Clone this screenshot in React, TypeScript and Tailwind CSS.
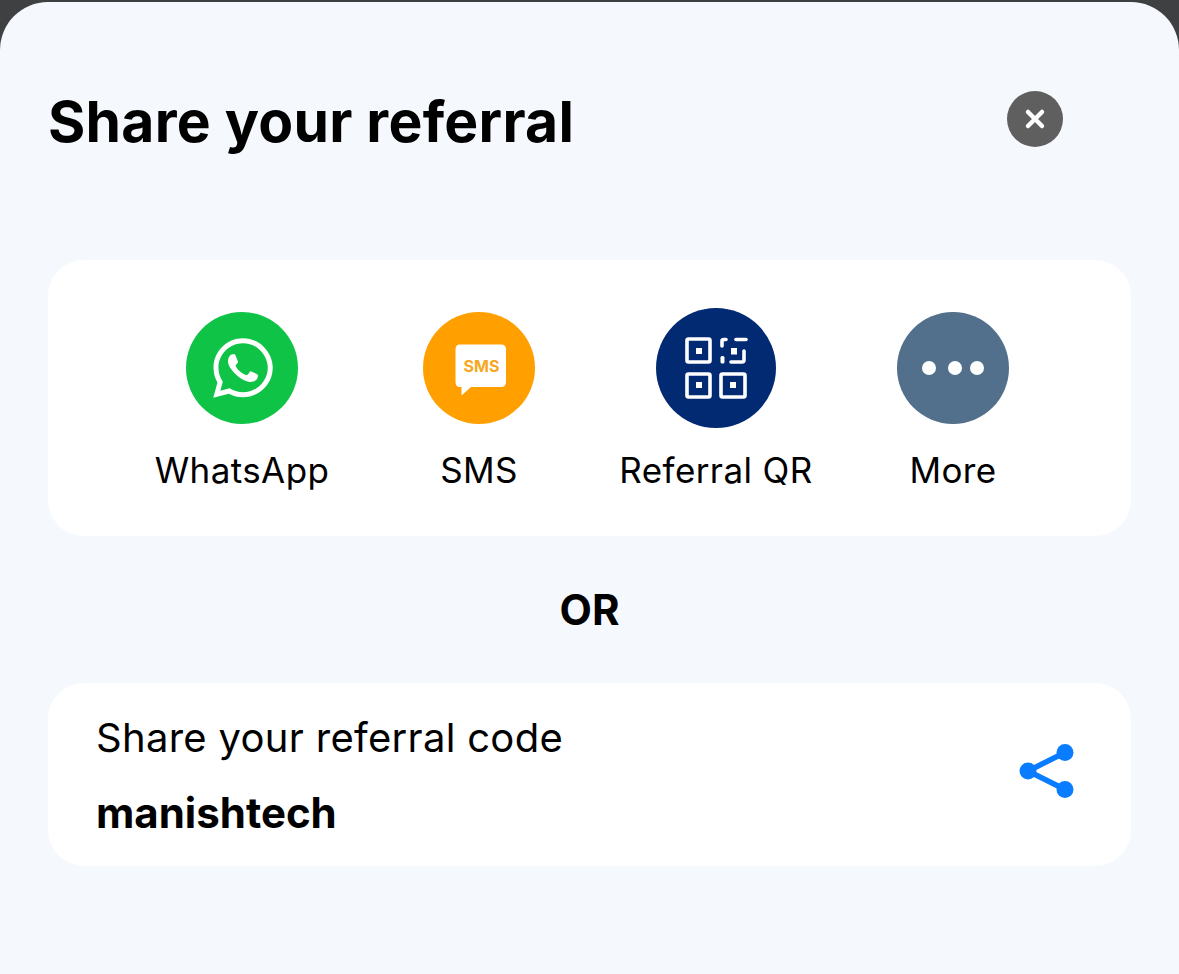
import { FaWhatsapp } from "react-icons/fa";

const font = { fontFamily: "Inter, 'Noto Sans', sans-serif" };

function QrIcon() {
  return (
    <svg viewBox="0 0 64 64" className="w-[64px] h-[64px]" fill="none" stroke="white" strokeWidth="3.6">
      <rect x="3" y="3" width="23" height="23" rx="1.5" />
      <rect x="12" y="12" width="6" height="6" fill="white" stroke="none" />
      <rect x="3" y="38" width="23" height="23" rx="1.5" />
      <rect x="12" y="46" width="6" height="6" fill="white" stroke="none" />
      <rect x="37" y="38" width="24" height="23" rx="1.5" />
      <rect x="46" y="46" width="6" height="6" fill="white" stroke="none" />
      <path d="M38 10V5Q38 3.5 40 3.5H42" strokeLinecap="round" />
      <path d="M52 3.5H62" strokeLinecap="round" />
      <path d="M60 15V24Q60 26 58 26H47" strokeLinecap="round" />
      <rect x="47" y="12" width="6" height="6.5" fill="white" stroke="none" />
      <rect x="36.5" y="20" width="4" height="7.5" rx="1.5" fill="white" stroke="none" />
    </svg>
  );
}

function SmsIcon() {
  return (
    <svg viewBox="0 0 52 52" className="w-[52px] h-[52px] ml-[4px] mt-[4px]">
      <path
        d="M5 0.5H46Q51 0.5 51 5.5V38Q51 43 46 43H16L6.5 51.5V43H5Q0.5 43 0.5 38V5.5Q0.5 0.5 5 0.5Z"
        fill="white"
      />
    </svg>
  );
}

function Item({ label, children }: { label: string; children: React.ReactNode }) {
  return (
    <div className="w-[237px] flex flex-col items-center">
      <div className="h-[120px] flex items-center justify-center">{children}</div>
      <span className="mt-[19px] text-[35px] leading-[46px] tracking-[0.4px] text-black whitespace-nowrap">
        {label}
      </span>
    </div>
  );
}

export default function App() {
  return (
    <div className="w-[1179px] h-[974px] bg-[#3f4042] pt-[2px] overflow-hidden" style={font}>
      <div className="h-[972px] bg-[#f5f9fe] rounded-t-[48px] px-[48px]">
        {/* Header */}
        <div className="flex items-center justify-between pt-[88px] pr-[68px]">
          <h1 className="text-[57px] leading-[64px] font-bold tracking-[0.25px] text-black">Share your referral</h1>
          <button className="w-[56px] h-[56px] mb-[6px] rounded-full bg-[#5f5f5f] flex items-center justify-center">
            <svg viewBox="0 0 24 24" className="w-[24px] h-[24px]" stroke="white" strokeWidth="4.5" strokeLinecap="round">
              <path d="M5 5L19 19M19 5L5 19" />
            </svg>
          </button>
        </div>

        {/* Share options */}
        <div className="mt-[106px] h-[276px] bg-white rounded-[36px] flex justify-center pt-[48px] pl-[16px]">
          <Item label="WhatsApp">
            <div className="w-[112px] h-[112px] rounded-full bg-[#0fc347] flex items-center justify-center">
              <FaWhatsapp className="w-[68px] h-[68px] ml-[2px] text-white" />
            </div>
          </Item>
          <Item label="SMS">
            <div className="relative w-[112px] h-[112px] rounded-full bg-[#ff9f00] flex items-center justify-center">
              <SmsIcon />
              <span className="absolute left-[5px] right-0 top-[44px] text-center text-[16px] leading-[20px] font-bold text-[#f7a823]">
                SMS
              </span>
            </div>
          </Item>
          <Item label="Referral QR">
            <div className="w-[120px] h-[120px] rounded-full bg-[#012a73] flex items-center justify-center">
              <QrIcon />
            </div>
          </Item>
          <Item label="More">
            <div className="w-[112px] h-[112px] rounded-full bg-[#526f8b] flex items-center justify-center">
              <span className="w-[14px] h-[14px] rounded-full bg-white" />
              <span className="w-[14px] h-[14px] ml-[12px] rounded-full bg-white" />
              <span className="w-[14px] h-[14px] ml-[8px] rounded-full bg-white" />
            </div>
          </Item>
        </div>

        <div className="mt-[51px] text-center text-[42px] leading-[46px] font-bold text-black">OR</div>

        {/* Referral code */}
        <div className="mt-[50px] h-[183px] bg-white rounded-[36px] pl-[48px] pr-[56px] flex items-center justify-between">
          <div className="flex flex-col pt-[2px]">
            <span className="text-[40px] leading-[46px] tracking-[0.3px] text-black">Share your referral code</span>
            <span className="mt-[29px] text-[42px] leading-[46px] font-bold text-black">manishtech</span>
          </div>
          <svg viewBox="0 0 56 56" className="w-[56px] h-[56px] mb-[7px]" fill="#0a7cff" stroke="#0a7cff">
            <path d="M9 28L46 9.5M9 28L46 46.5" strokeWidth="5.5" fill="none" />
            <circle cx="9" cy="28" r="8.5" stroke="none" />
            <circle cx="46" cy="9.5" r="8.5" stroke="none" />
            <circle cx="46" cy="46.5" r="8.5" stroke="none" />
          </svg>
        </div>
      </div>
    </div>
  );
}
